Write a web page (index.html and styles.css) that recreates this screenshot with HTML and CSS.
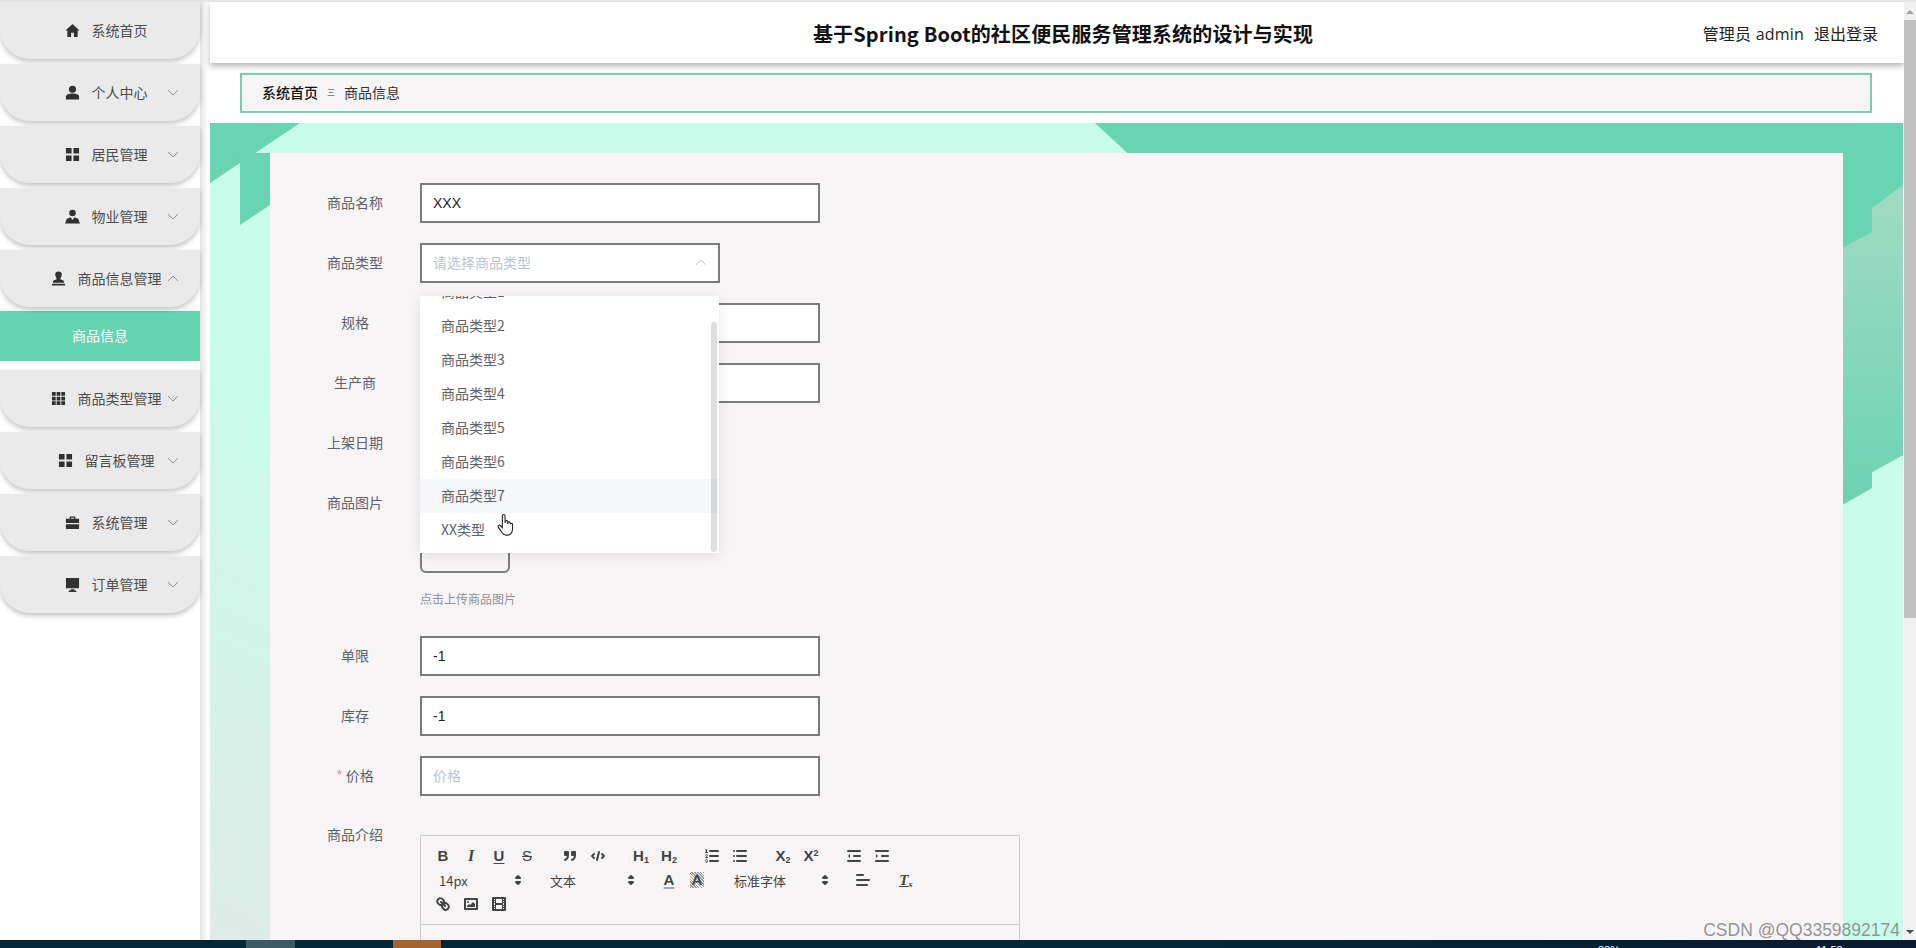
FILE: index.html
```html
<!DOCTYPE html>
<html lang="zh-CN">
<head>
<meta charset="utf-8">
<title>商品信息</title>
<link rel="stylesheet" href="styles.css">
</head>
<body>
<div class="screen">
  <div class="app">
    <aside class="sidebar">
      <div class="menu-item"><span class="menu-label"><svg class="mi" viewBox="0 0 16 16"><path d="M8 1 .5 8H2.500v7H6.500v-4.500h3V15h4V8h2z"/></svg><span>系统首页</span></span></div>
      <div class="menu-item"><span class="menu-label"><svg class="mi" viewBox="0 0 16 16"><circle cx="8" cy="4.500" r="3.800"/><path d="M1 15.500v-3C1 10 4 9 8 9s7 1 7 3.500v3z"/></svg><span>个人中心</span></span><svg class="chev" viewBox="0 0 12 7"><path d="M1 1l5 5 5-5"/></svg></div>
      <div class="menu-item"><span class="menu-label"><svg class="mi" viewBox="0 0 16 16"><path d="M1 1h6v6H1zM9 1h6v6H9zM1 9h6v6H1zM9 9h6v6H9z"/></svg><span>居民管理</span></span><svg class="chev" viewBox="0 0 12 7"><path d="M1 1l5 5 5-5"/></svg></div>
      <div class="menu-item"><span class="menu-label"><svg class="mi" viewBox="0 0 16 16"><circle cx="8" cy="4.200" r="3.500"/><path d="M0 15.500 2 10.500 6 8.800l2 3 2-3 4 1.700 2 5z"/></svg><span>物业管理</span></span><svg class="chev" viewBox="0 0 12 7"><path d="M1 1l5 5 5-5"/></svg></div>
      <div class="menu-item"><span class="menu-label"><svg class="mi" viewBox="0 0 16 16"><path d="M8 .5a3.500 3.500 0 0 1 3.500 3.500c0 2-1.500 3-1.500 4.500 0 1 4 1 4 3v1H2v-1c0-2 4-2 4-3C6 7 4.500 6 4.500 4A3.500 3.500 0 0 1 8 .5zM1 13.500h14V15.500H1z"/></svg><span>商品信息管理</span></span><svg class="chev" viewBox="0 0 12 7"><path d="M1 6l5-5 5 5"/></svg></div>
      <div class="submenu-item">商品信息</div>
      <div class="menu-item"><span class="menu-label"><svg class="mi" viewBox="0 0 16 16"><path d="M1 1h4v4H1zM6 1h4v4H6zM11 1h4v4h-4zM1 6h4v4H1zM6 6h4v4H6zM11 6h4v4h-4zM1 11h4v4H1zM6 11h4v4H6zM11 11h4v4h-4z"/></svg><span>商品类型管理</span></span><svg class="chev" viewBox="0 0 12 7"><path d="M1 1l5 5 5-5"/></svg></div>
      <div class="menu-item"><span class="menu-label"><svg class="mi" viewBox="0 0 16 16"><path d="M1 1h6v6H1zM9 1h6v6H9zM1 9h6v6H1zM9 9h6v6H9z"/></svg><span>留言板管理</span></span><svg class="chev" viewBox="0 0 12 7"><path d="M1 1l5 5 5-5"/></svg></div>
      <div class="menu-item"><span class="menu-label"><svg class="mi" viewBox="0 0 16 16"><path d="M5 4V1.500h6V4h4v4.500H1V4zM6.500 2.800V4h3V2.800zM1 9.800h14V15H1z"/></svg><span>系统管理</span></span><svg class="chev" viewBox="0 0 12 7"><path d="M1 1l5 5 5-5"/></svg></div>
      <div class="menu-item"><span class="menu-label"><svg class="mi" viewBox="0 0 16 16"><path d="M1 1h14v11H1zM6 13h4v1.500h2V16H4v-1.500h2z"/></svg><span>订单管理</span></span><svg class="chev" viewBox="0 0 12 7"><path d="M1 1l5 5 5-5"/></svg></div>
    </aside>
    <main class="main">
      <header class="topbar">
        <h1 class="title">基于Spring Boot的社区便民服务管理系统的设计与实现</h1>
        <div class="account"><span class="who">管理员 admin</span><span>退出登录</span></div>
      </header>
      <nav class="crumbs"><b>系统首页</b><span class="sep">三</span><span>商品信息</span></nav>
      <section class="stage">
        <svg class="stage-bg" viewBox="0 0 1694 817" preserveAspectRatio="none">
          <defs>
            <linearGradient id="sideShade" x1="0" y1="0" x2="0" y2="1">
              <stop offset="0" stop-color="#a2dac5"/>
              <stop offset="1" stop-color="#6cd3b2"/>
            </linearGradient>
          </defs>
          <path class="g" d="M0 0H90L0 60z"/>
          <path class="g" d="M30 30H60V82L30 102z"/>
          <path class="g" d="M885.500 0H1694V332L1663 349V365L1633 382V30H918z"/>
          <path fill="url(#sideShade)" d="M1694 62 1663 85V109L1633 125V382L1663 365V349L1694 332z"/>
        </svg>
        <form class="panel">
          <div class="row"><label>商品名称</label><div class="field wide val">XXX</div></div>
          <div class="row"><label>商品类型</label><div class="field narrow ph sel">请选择商品类型<svg class="chev caret" viewBox="0 0 12 7"><path d="M1 6l5-5 5 5"/></svg></div></div>
          <div class="row"><label>规格</label><div class="field wide"></div></div>
          <div class="row"><label>生产商</label><div class="field wide"></div></div>
          <div class="row"><label>上架日期</label></div>
          <div class="row row-upload"><label>商品图片</label><div class="upload-wrap"><div class="upload"></div><p class="hint">点击上传商品图片</p></div></div>
          <div class="row"><label>单限</label><div class="field wide val">-1</div></div>
          <div class="row"><label>库存</label><div class="field wide val">-1</div></div>
          <div class="row"><label><i>*</i> 价格</label><div class="field wide ph">价格</div></div>
          <div class="row row-editor"><label>商品介绍</label>
            <div class="editor">
              <div class="toolbar">
                <div class="tools">
                  <span class="t gl b">B</span><span class="t gl it">I</span><span class="t gl un">U</span><span class="t gl st">S</span>
                  <svg class="t gap ic" viewBox="0 0 18 18"><path class="fill" d="M4 5h3v3H4zM11 5h3v3h-3z"/><path class="th" d="M7 8c0 4-3 5-3 5M14 8c0 4-3 5-3 5"/></svg>
                  <svg class="t ic" viewBox="0 0 18 18"><path d="M5 7 3 9l2 2M13 7l2 2-2 2M10 5 8 13"/></svg>
                  <span class="t gap gl hh">H<sub>1</sub></span><span class="t gl hh">H<sub>2</sub></span>
                  <svg class="t gap ic" viewBox="0 0 18 18"><path d="M7 4h8M7 9h8M7 14h8"/><path class="thin" d="M2.500 5.500h2M3.500 5.500V2.500l-1 .5M4.500 10.500h-2c0-.23 1.850-1.080 1.850-2.230A.96.96 0 0 0 2.500 8.160M2.500 14.850a.96.96 0 0 0 1.850-.11A.7.7 0 0 0 3.750 14a.69.69 0 0 0 .6-.74.96.96 0 0 0-1.850-.11"/></svg>
                  <svg class="t ic" viewBox="0 0 18 18"><path d="M6 4h9M6 9h9M6 14h9M3 4h0M3 9h0M3 14h0"/></svg>
                  <span class="t gap gl ss">X<sub>2</sub></span><span class="t gl ss">X<sup>2</sup></span>
                  <svg class="t gap ic" viewBox="0 0 18 18"><path d="M3 14h12M3 4h12M9 9h6"/><path class="solid" d="M5 7v4L3 9z"/></svg>
                  <svg class="t ic" viewBox="0 0 18 18"><path d="M3 14h12M3 4h12M9 9h6"/><path class="solid" d="M3 7v4l2-2z"/></svg>
                </div>
                <div class="tools">
                  <span class="pick p1">14px<svg class="updown" viewBox="0 0 18 18"><path d="M7 7l2-2 2 2zM7 11l2 2 2-2z"/></svg></span>
                  <span class="pick p2 gap">文本<svg class="updown" viewBox="0 0 18 18"><path d="M7 7l2-2 2 2zM7 11l2 2 2-2z"/></svg></span>
                  <span class="t gap gl col">A</span><span class="t gl colbg"><span>A</span></span>
                  <span class="pick p3 gap">标准字体<svg class="updown" viewBox="0 0 18 18"><path d="M7 7l2-2 2 2zM7 11l2 2 2-2z"/></svg></span>
                  <svg class="t gap ic" viewBox="0 0 18 18"><path d="M3 9h12M3 14h10M3 4h6"/></svg>
                  <span class="t gap gl clr">T<sub>x</sub></span>
                </div>
                <div class="tools">
                  <svg class="t ic" viewBox="0 0 18 18"><path d="M7 7l4 4M8.900 4.580a3.480 3.480 0 0 1 .36 4.680A3.480 3.480 0 0 1 4.580 8.900C3.190 7.500 2.040 6.400 4.220 4.220S7.500 3.190 8.900 4.580zM13.420 9.100a3.480 3.480 0 0 0-4.680-.36 3.480 3.480 0 0 0 .36 4.680c1.390 1.390 2.500 2.540 4.680.36s1.030-3.280-.36-4.680z"/></svg>
                  <svg class="t ic" viewBox="0 0 18 18"><path d="M3 4h12v10H3z"/><circle class="solid" cx="6" cy="7" r="1"/><path class="solid" d="M5 12v-1l2-2 1 1 3-3 2 2v3z"/></svg>
                  <svg class="t ic" viewBox="0 0 18 18"><path d="M3 3h12v12H3z"/><path class="solid" d="M5 3h1v12H5zM12 3h1v12h-1zM5 8h8v2H5zM3 5h3v1H3zM3 7h3v1H3zM3 10h3v1H3zM3 12h3v1H3zM12 5h3v1h-3zM12 7h3v1h-3zM12 10h3v1h-3zM12 12h3v1h-3z"/></svg>
                </div>
              </div>
              <div class="editor-body"></div>
            </div>
          </div>
        </form>
      </section>
    </main>
    <div class="scrollbar"><span class="arrow up"></span><span class="thumb"></span><span class="arrow down"></span></div>
  </div>

  <!-- open dropdown of the 商品类型 select -->
  <div class="dropdown">
    <ul class="options">
      <li>商品类型1</li>
      <li>商品类型2</li>
      <li>商品类型3</li>
      <li>商品类型4</li>
      <li>商品类型5</li>
      <li>商品类型6</li>
      <li class="hover">商品类型7</li>
      <li>XX类型</li>
    </ul>
    <span class="dd-thumb"></span>
    <svg class="cursor" viewBox="0 0 16 22"><path d="M5 10V2.500a1.300 1.300 0 0 1 2.600 0V9l.2-1.500a1.200 1.200 0 0 1 2.300.3V10l.2-1a1.100 1.100 0 0 1 2.200.3l.1 1a1 1 0 0 1 2 .1V15c0 3-2 5.500-4.500 5.500H8.500C6 20.500 5 19 3.500 16.500L1.200 13c-.8-1.500 1-2.500 2-1.500L5 13.500z"/></svg>
  </div>

  <div class="watermark">CSDN @QQ3359892174</div>
  <footer class="taskbar">
    <span class="task t1"></span><span class="task t2"></span>
    <span class="tray tr1">33%</span><span class="tray tr2">11:58</span>
  </footer>
</div>
</body>
</html>
```
FILE: styles.css
```css
* { box-sizing: border-box; }
html, body { margin: 0; height: 100%; overflow: hidden; }
body { font-family: "Noto Sans CJK SC", "Liberation Sans", sans-serif; color: #606266; background: #fff; }

.screen { position: relative; width: 1916px; height: 948px; overflow: hidden; display: flex; flex-direction: column; }
.app { flex: 1; min-height: 0; display: flex; border-top: 2px solid #e4e4e4; }

/* side menu */
.sidebar { width: 200px; flex: none; background: #fff; display: flex; flex-direction: column; }
.menu-item { height: 57px; margin-bottom: 5px; flex: none; display: flex; align-items: center; justify-content: center; position: relative; padding-left: 12px; background: #eaeaea; border-radius: 0 0 30px 30px; box-shadow: 0 3px 5px rgba(0,0,0,.22); color: #4d4d4d; font-size: 14px; }
.menu-label { display: flex; align-items: center; gap: 12px; }
.menu-label span { margin-top: -2px; }
.mi { width: 15px; height: 15px; fill: #303133; }
.chev { width: 12px; height: 7px; fill: none; stroke: #909399; stroke-width: 1; }
.menu-item > .chev { position: absolute; right: 21px; top: 25px; }
.submenu-item { height: 50px; margin: -1px 0 9px; padding-bottom: 2px; flex: none; background: #66d4b0; color: #fff; font-size: 14px; display: flex; align-items: center; justify-content: center; }

/* content column */
.main { flex: 1; min-width: 0; display: flex; flex-direction: column; padding-left: 10px; background: linear-gradient(to right, #e4e4e4, #fff 8px); overflow: hidden; }
.topbar { height: 61px; flex: none; padding: 3px 0 0 12px; display: flex; align-items: center; justify-content: center; position: relative; background: #fff; box-shadow: 0 3px 6px rgba(0,0,0,.3); z-index: 1; }
.title { margin: 0; font-size: 20px; line-height: 1; font-weight: 700; letter-spacing: .14px; color: #111; }
.account { position: absolute; right: 26px; top: 20px; display: flex; gap: 10px; font-size: 16px; line-height: 24px; color: #222; font-family: "Open Sans", "Noto Sans CJK SC", sans-serif; }
.who { letter-spacing: .2px; }
.crumbs { height: 40px; flex: none; margin: 10px 32px 10px 30px; display: flex; align-items: center; gap: 9px; padding: 0 0 3px 20px; font-size: 14px; color: #333; background: #f7f5f6; border: 2px solid #7fccb4; }
.crumbs b { color: #111; font-weight: 500; }
.sep { font-size: 8px; color: #333; }

/* green backdrop and the form card */
.stage { position: relative; flex: 1; min-height: 0; margin-right: 1px; padding: 30px 60px 0; background: linear-gradient(to top right, #dfebe7 0%, #c7fdea 38%); overflow: hidden; }
.stage-bg { position: absolute; inset: 0; width: 100%; height: 100%; }
.stage-bg .g { fill: #68d4b1; }
.panel { position: relative; background: #f7f5f6; min-height: 830px; padding: 30px 0 0 20px; font-size: 14px; }

.row { display: flex; align-items: center; min-height: 40px; margin-bottom: 20px; }
.row label { width: 130px; text-align: center; flex: none; color: #606266; font-size: 14px; line-height: 36px; padding-bottom: 2px; }
.row label i { color: #e8909a; font-style: normal; }
.field { height: 40px; border: 2px solid #7c7c7c; background: #fff; display: flex; align-items: center; padding-left: 11px; font-size: 14px; }
.wide { width: 400px; }
.narrow { width: 300px; }
.val { color: #222; font-family: "Liberation Sans", sans-serif; }
.ph { color: #c0c4cc; padding-bottom: 2px; }
.sel { position: relative; }
.caret { position: absolute; right: 11px; top: 14px; stroke: #c0c4cc; }
.row-upload { align-items: flex-start; margin-bottom: 28px; }
.row-upload label { padding-top: 1px; }
.upload { width: 90px; height: 90px; border: 2px solid #7c7c7c; border-radius: 6px; }
.hint { margin: 16px 0 0; color: #909399; font-size: 12px; line-height: 20px; height: 19px; }

/* rich text editor */
.row-editor { align-items: flex-start; margin-bottom: 0; }
.editor { width: 600px; border: 1px solid #ccc; margin-top: 19px; }
.toolbar { border-bottom: 1px solid #ccc; padding: 8px; }
.tools { display: flex; align-items: center; height: 24px; color: #444; }
.t { width: 28px; height: 24px; padding: 3px 5px; flex: none; }
.gap { margin-left: 15px; }
.gl { display: block; padding: 0; text-align: center; font-family: "Liberation Sans", sans-serif; font-size: 15px; color: #444; line-height: 24px; font-weight: 700; }
.it { font-style: italic; font-family: "Liberation Serif", serif; font-size: 16px; }
.un { text-decoration: underline; text-underline-offset: 2px; }
.st { text-decoration: line-through; font-weight: 400; }
.gl sub, .gl sup { font-size: 9px; line-height: 0; }
.gl sub { vertical-align: -2px; }
.gl sup { vertical-align: 5px; }
.ic { fill: none; stroke: #444; stroke-width: 2; stroke-linecap: round; stroke-linejoin: round; }
.ic .thin { stroke-width: 1; }
.ic .th { fill: none; stroke-width: 2; }
.ic .fill, .ic .solid { fill: #444; stroke: none; }
.ic .fill { stroke: #444; stroke-width: 2; }
.pick { display: inline-flex; align-items: center; justify-content: space-between; height: 24px; color: #444; font-size: 13px; padding-left: 8px; flex: none; }
.p1 { width: 98px; padding-left: 10px; }
.p2 { width: 98px; }
.p3 { width: 108px; }
.updown { width: 18px; height: 18px; fill: #444; stroke: #444; stroke-width: 2; stroke-linejoin: round; }
.col { text-decoration: underline; text-decoration-color: #aaa; text-decoration-thickness: 2px; text-underline-offset: 2px; }
.colbg span { display: inline-block; width: 14px; line-height: 16px; text-align: center; background: repeating-linear-gradient(45deg, #999 0 1px, #f7f5f6 1px 2px); }
.clr { font-family: "Liberation Serif", serif; font-style: italic; text-decoration: underline; font-size: 15px; }
.editor-body { height: 120px; }

/* select options, laid over the form */
.dropdown { position: absolute; left: 420px; top: 296px; width: 299px; height: 257px; background: #fff; box-shadow: 0 2px 12px rgba(0,0,0,.1); overflow: hidden; }
.options { list-style: none; margin: 0; padding: 0; position: relative; top: -21px; }
.options li { height: 34px; line-height: 32px; padding-left: 21px; font-size: 14px; color: #606266; }
.options .hover { background: #f5f7fa; }
.dd-thumb { position: absolute; right: 2px; top: 26px; width: 6px; height: 230px; border-radius: 3px; background: rgba(144,147,153,.3); }
.cursor { position: absolute; left: 77px; top: 217px; width: 17px; height: 24px; fill: #fff; stroke: #222; stroke-width: 1; }

/* page scrollbar */
.scrollbar { width: 12px; flex: none; background: #f1f1f1; display: flex; flex-direction: column; align-items: center; position: relative; z-index: 2; }
.arrow { width: 0; height: 0; border-left: 4px solid transparent; border-right: 4px solid transparent; flex: none; }
.arrow.up { border-bottom: 4px solid #a3a3a3; margin: 8px 0 6px; }
.arrow.down { border-top: 4px solid #505050; margin: auto 0 6px; }
.thumb { width: 100%; height: 598px; background: #c1c1c1; }

.watermark { position: absolute; right: 16px; top: 918px; font-family: "Liberation Sans", sans-serif; font-size: 17.500px; line-height: 24px; color: rgba(130,130,130,.85); z-index: 3; }

/* desktop taskbar strip */
.taskbar { height: 8px; flex: none; background: linear-gradient(to right, #022838 60%, #0a1a30); position: relative; overflow: hidden; }
.task { position: absolute; top: 0; height: 8px; width: 49px; }
.t1 { left: 246px; background: #3c5a66; }
.t2 { left: 393px; width: 48px; background: #a5642e; }
.tray { position: absolute; top: 3px; font-family: "Liberation Sans", sans-serif; font-size: 11px; line-height: 14px; color: #fff; }
.tr1 { left: 1598px; }
.tr2 { left: 1816px; }
```
